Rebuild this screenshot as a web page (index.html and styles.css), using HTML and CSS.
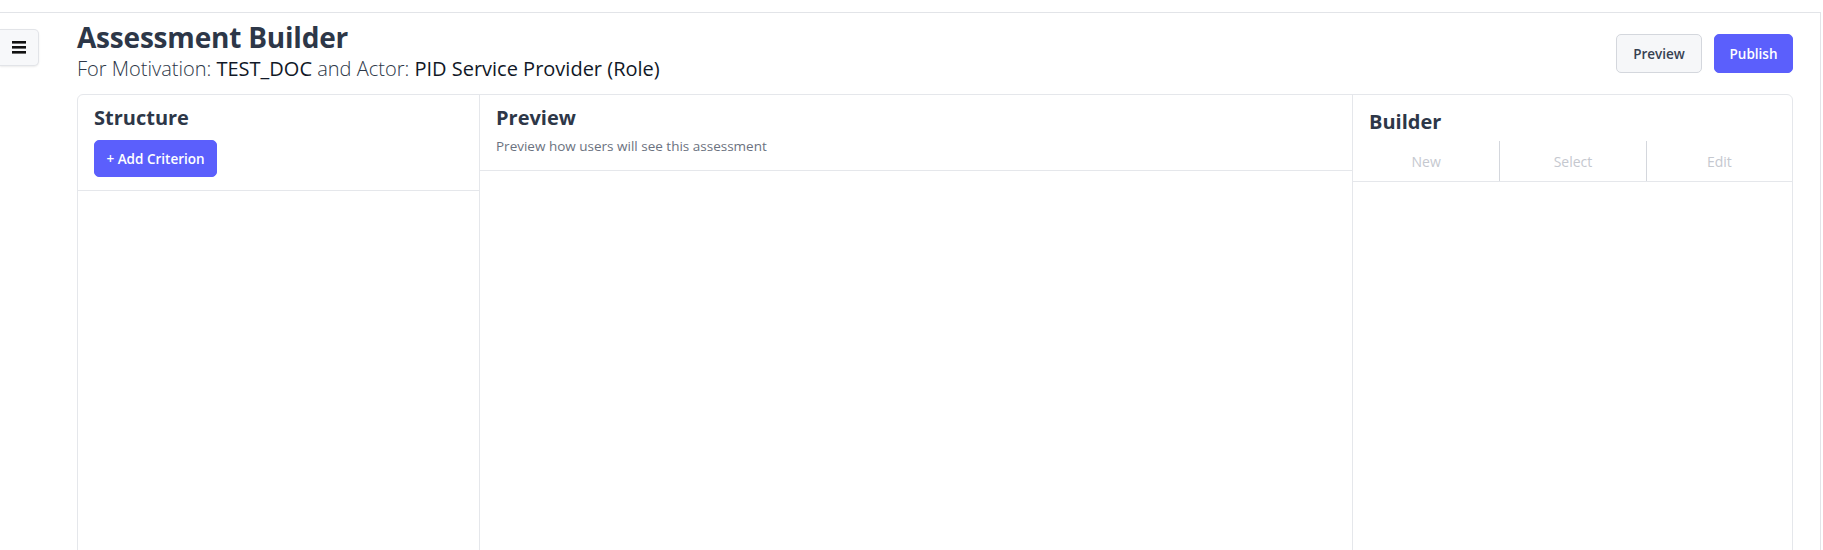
FILE: index.html
```html
<!DOCTYPE html>
<html lang="en">
<head>
<meta charset="utf-8">
<title>Assessment Builder</title>
<link rel="stylesheet" href="styles.css">
</head>
<body>
<div class="topgap"></div>
<div class="frame">
  <aside class="rail">
    <button class="menu-btn" aria-label="Menu">
      <svg width="14" height="13" viewBox="0 0 14 13"><rect x="0" y="0" width="14" height="2.6" fill="#111"/><rect x="0" y="5" width="14" height="2.6" fill="#111"/><rect x="0" y="10" width="14" height="2.6" fill="#111"/></svg>
    </button>
  </aside>
  <main class="main">
    <header class="page-head">
      <div class="titles">
        <h1 class="title">Assessment Builder</h1>
        <p class="subtitle">For Motivation: <span class="em">TEST_DOC</span> and Actor: <span class="em">PID Service Provider (Role)</span></p>
      </div>
      <div class="actions">
        <button class="btn btn-light">Preview</button>
        <button class="btn btn-primary">Publish</button>
      </div>
    </header>
    <section class="board">
      <div class="col col-structure">
        <div class="col-head">
          <h2 class="col-title">Structure</h2>
          <button class="btn btn-primary btn-add">+ Add Criterion</button>
        </div>
        <div class="col-body"></div>
      </div>
      <div class="col col-preview">
        <div class="col-head">
          <h2 class="col-title">Preview</h2>
          <p class="col-sub">Preview how users will see this assessment</p>
        </div>
        <div class="col-body"></div>
      </div>
      <div class="col col-builder">
        <div class="col-head builder-head">
          <h2 class="col-title">Builder</h2>
        </div>
        <div class="tabs">
          <div class="tab">New</div>
          <div class="tab">Select</div>
          <div class="tab">Edit</div>
        </div>
        <div class="col-body"></div>
      </div>
    </section>
  </main>
</div>
</body>
</html>
```
FILE: styles.css
```css
html, body {
  margin: 0;
  padding: 0;
  background: #fff;
  overflow: hidden;
  height: 100%;
}
body {
  font-family: "Open Sans", "Noto Sans", sans-serif;
  color: #2d3748;
}
.topgap {
  height: 12px;
}
.frame {
  display: flex;
  width: 1820px;
  border-top: 1px solid #e2e4e8;
  border-right: 1px solid #e2e4e8;
  min-height: 700px;
}
.rail {
  width: 77px;
  flex: none;
  padding-top: 16px;
}
.menu-btn {
  width: 39px;
  height: 37px;
  display: flex;
  align-items: center;
  justify-content: center;
  padding: 0;
  background: #f7f8fa;
  border: 1px solid #e2e4e8;
  border-left: none;
  border-radius: 0 5px 5px 0;
  box-shadow: 0 1px 2px rgba(0,0,0,0.08);
}
.main {
  flex: 1;
  padding-right: 27px;
}
.page-head {
  display: flex;
  justify-content: space-between;
  align-items: flex-start;
  height: 81px;
}
.titles {
  padding-top: 7px;
}
.title {
  margin: 0;
  font-size: 28px;
  font-weight: 700;
  line-height: 34px;
  color: #2d3748;
  letter-spacing: -0.2px;
}
.subtitle {
  margin: 1px 0 0;
  font-size: 20px;
  font-weight: 300;
  line-height: 28px;
  color: #2d3748;
}
.subtitle .em {
  font-weight: 400;
  color: #111827;
}
.actions {
  display: flex;
  gap: 12px;
  padding-top: 21px;
}
.btn {
  font-family: inherit;
  font-size: 13.5px;
  font-weight: 600;
  border-radius: 5px;
  height: 39px;
  padding: 0;
  cursor: pointer;
}
.btn-light {
  background: #f6f7f9;
  border: 1px solid #d4d7dd;
  color: #374151;
  width: 86px;
}
.btn-primary {
  background: #5b5ffc;
  border: 1px solid #5b5ffc;
  color: #fff;
  width: 79px;
}
.board {
  display: grid;
  grid-template-columns: 401px 1fr 440px;
  border: 1px solid #e5e7eb;
  border-radius: 6px;
  min-height: 600px;
}
.col {
  display: flex;
  flex-direction: column;
}
.col + .col {
  border-left: 1px solid #e5e7eb;
}
.col-head {
  border-bottom: 1px solid #e5e7eb;
  padding: 11px 16px 13px;
}
.col-title {
  margin: 0;
  font-size: 20px;
  font-weight: 700;
  line-height: 24px;
  color: #2d3748;
}
.btn-add {
  margin-top: 10px;
  width: 123px;
  height: 37px;
  display: block;
}
.col-preview .col-head {
  padding: 11px 16px 14px;
}
.col-sub {
  margin: 6px 0 0;
  font-size: 13.5px;
  line-height: 20px;
  color: #6b7280;
}
.builder-head {
  border-bottom: none;
  padding: 15px 16px 7px;
}
.tabs {
  display: grid;
  grid-template-columns: 1fr 1fr 1fr;
  height: 40px;
  border-bottom: 1px solid #e5e7eb;
}
.tab {
  display: flex;
  align-items: center;
  justify-content: center;
  font-size: 14px;
  color: #c5c8cf;
}
.tab + .tab {
  border-left: 1px solid #d4d7dd;
}
.col-body {
  flex: 1;
}
```
